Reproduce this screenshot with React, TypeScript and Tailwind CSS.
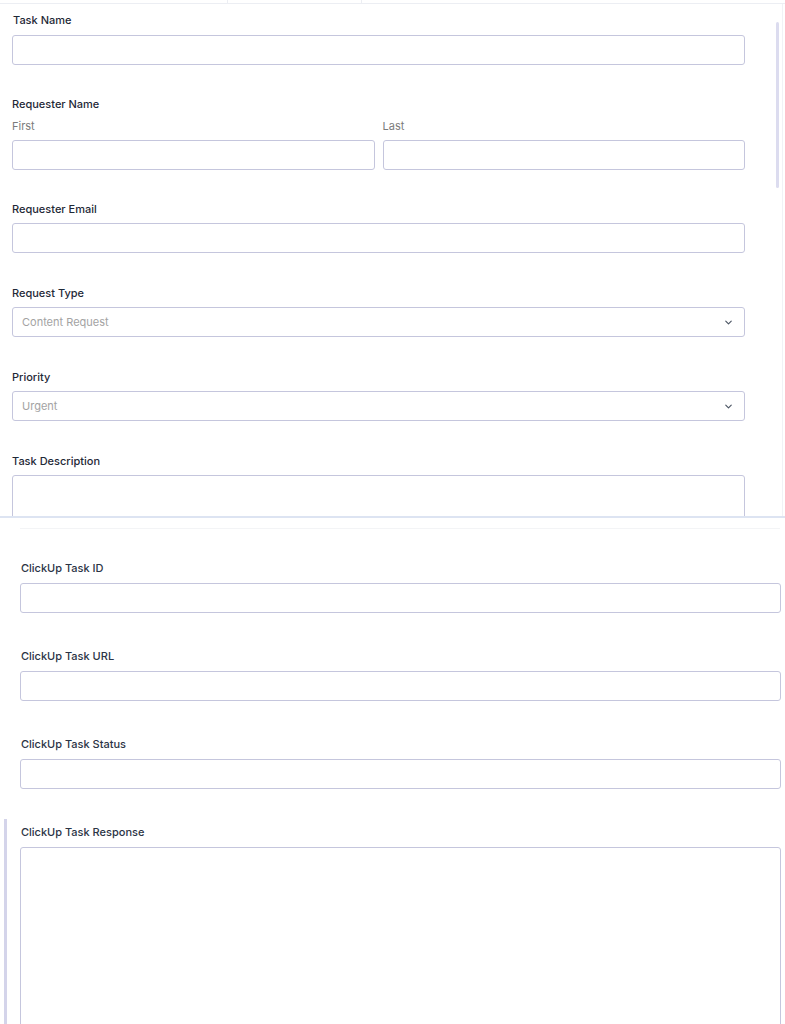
import { ChevronDown } from "lucide-react";

const font = { fontFamily: "Inter, 'Noto Sans', sans-serif" };

function TopLabel({ children }: { children: React.ReactNode }) {
  return (
    <p className="h-4 text-[11px] font-medium leading-4 text-[#1f2937]">{children}</p>
  );
}

function TopInput({ className = "" }: { className?: string }) {
  return (
    <div
      className={`h-[30px] rounded-[3px] border border-[#c5c6dd] bg-white ${className}`}
    />
  );
}

function TopSelect({ value }: { value: string }) {
  return (
    <div className="mt-[6px] flex h-[30px] items-center justify-between rounded-[3px] border border-[#c5c6dd] bg-white pl-[9px] pr-[10px]">
      <span className="text-[11px] leading-4 text-[#a3a3a3]">{value}</span>
      <ChevronDown className="size-[11px] text-[#4b5563]" strokeWidth={2.5} aria-hidden />
    </div>
  );
}

function BottomField({ label, tall = false }: { label: string; tall?: boolean }) {
  return (
    <div className={tall ? "" : "mb-[35px]"}>
      <p className="h-4 pl-px text-[11px] font-medium leading-4 text-[#2b3445]">{label}</p>
      <div
        className={`mt-[7px] rounded-[3px] border border-[#c5c6dd] bg-white ${
          tall ? "h-[220px]" : "h-[30px]"
        }`}
      />
    </div>
  );
}

export default function App() {
  return (
    <div className="h-[1024px] w-[785px] overflow-hidden bg-white" style={font}>
      {/* top panel */}
      <section className="relative h-[518px] overflow-hidden border-b-2 border-[#dde4f2]">
        <div className="flex h-[4px] border-b border-[#eceef3]">
          <div className="w-[228px] border-r border-[#eceef3]" />
          <div className="w-[134px] border-r border-[#eceef3]" />
        </div>

        <div className="flex">
          <div className="w-[783px] border-r border-[#f1f2f6] pb-10">
            <div className="ml-[12px] w-[733px]">
              <div className="pt-[8px]">
                <TopLabel>
                  <span className="pl-px">Task Name</span>
                </TopLabel>
                <TopInput className="mt-[7px]" />
              </div>

              <div className="mt-[31px]">
                <TopLabel>Requester Name</TopLabel>
                <div className="mt-[6px] flex gap-[8px]">
                  <div className="flex-1">
                    <p className="h-4 text-[11px] leading-4 text-[#7b7b7b]">First</p>
                    <TopInput className="mt-[6px]" />
                  </div>
                  <div className="flex-1">
                    <p className="h-4 text-[11px] leading-4 text-[#7b7b7b]">Last</p>
                    <TopInput className="mt-[6px]" />
                  </div>
                </div>
              </div>

              <div className="mt-[31px]">
                <TopLabel>Requester Email</TopLabel>
                <TopInput className="mt-[6px]" />
              </div>

              <div className="mt-[32px]">
                <TopLabel>Request Type</TopLabel>
                <TopSelect value="Content Request" />
              </div>

              <div className="mt-[32px]">
                <TopLabel>Priority</TopLabel>
                <TopSelect value="Urgent" />
              </div>

              <div className="mt-[32px]">
                <TopLabel>Task Description</TopLabel>
                <div className="mt-[6px] h-[90px] rounded-[3px] border border-[#c5c6dd] bg-white" />
              </div>
            </div>
          </div>
        </div>

        {/* scrollbar thumb */}
        <div className="absolute left-[776px] top-[22px] h-[166px] w-[3px] rounded-full bg-[#dcdcef]" />
      </section>

      {/* bottom panel */}
      <section className="relative px-[20px] pr-[5px]">
        <div className="mt-[10px] h-px w-[760px] bg-[#f3f4f6]" />
        <div className="mt-[31px] w-[761px]">
          <BottomField label="ClickUp Task ID" />
          <BottomField label="ClickUp Task URL" />
          <BottomField label="ClickUp Task Status" />
          <div className="relative">
            <div className="absolute -left-[16px] -top-[5px] h-[260px] w-[3px] bg-[#d4d4ea]" />
            <BottomField label="ClickUp Task Response" tall />
          </div>
        </div>
      </section>
    </div>
  );
}
